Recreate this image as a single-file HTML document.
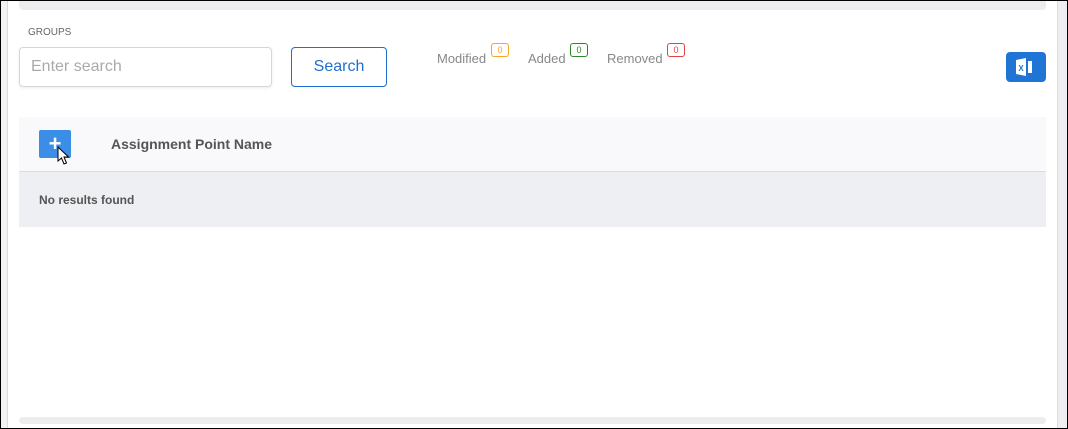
<!DOCTYPE html>
<html><head><style>
*{box-sizing:border-box;margin:0;padding:0}
body{width:1068px;height:429px;position:relative;overflow:hidden;background:#fff;font-family:"Liberation Sans",sans-serif;}
.frame{position:absolute;left:0;top:0;width:1068px;height:429px;border:1px solid #000;}
.ls{position:absolute;left:1px;top:0;width:7px;height:429px;background:#f3f3f5;border-right:1px solid #dcdce0}
.rs{position:absolute;left:1057px;top:0;width:10px;height:429px;background:#eeeef2;border-left:1px solid #dcdce0}
.bar{position:absolute;left:19px;width:1027px;background:#ededef;border-radius:4px}
.abs{position:absolute}
</style></head><body>
<div class="ls"></div><div class="rs"></div>
<div class="bar" style="top:0;height:10px;border-radius:0 0 4px 4px"></div>
<div class="bar" style="top:417px;height:7px"></div>
<div class="abs" style="left:28px;top:27px;font-size:10px;color:#666">GROUPS</div>
<div class="abs" style="left:19px;top:47px;width:253px;height:40px;border:1px solid #d5d7dc;border-radius:4px;box-shadow:0 1px 3px rgba(0,0,0,.08);font-size:16px;color:#aaa;padding:10px 11px">Enter search</div>
<div class="abs" style="left:291px;top:47px;width:96px;height:40px;border:1px solid #1f6fcf;border-radius:4px;font-size:16px;color:#1f6fcf;text-align:center;line-height:38px">Search</div>
<div class="abs" style="left:437px;top:51px;font-size:13px;color:#888">Modified</div>
<div class="abs" style="left:491px;top:43px;width:18px;height:14px;border:1px solid #f5a623;border-radius:3px;font-size:9px;color:#f5a623;text-align:center;line-height:12px">0</div>
<div class="abs" style="left:528px;top:51px;font-size:13px;color:#888">Added</div>
<div class="abs" style="left:570px;top:43px;width:18px;height:14px;border:1px solid #2a8a2a;border-radius:3px;font-size:9px;color:#2a8a2a;text-align:center;line-height:12px">0</div>
<div class="abs" style="left:607px;top:51px;font-size:13px;color:#888">Removed</div>
<div class="abs" style="left:667px;top:43px;width:18px;height:14px;border:1px solid #e84040;border-radius:3px;font-size:9px;color:#e84040;text-align:center;line-height:12px">0</div>
<div class="abs" style="left:1006px;top:52px;width:40px;height:30px;background:#1f74d6;border-radius:4px">
<svg width="40" height="30" viewBox="0 0 40 30"><path d="M10 8 L20 6 L20 24 L10 22Z" fill="#fff"/><rect x="22" y="9" width="4" height="12" fill="#fff"/><text x="15" y="19" font-size="8" font-weight="bold" fill="#1f74d6" text-anchor="middle" font-family="Liberation Sans">X</text></svg></div>
<div class="abs" style="left:19px;top:117px;width:1027px;height:55px;background:#f9f9fb;border-bottom:1px solid #dcdce0"></div>
<div class="abs" style="left:39px;top:130px;width:32px;height:28px;background:#3a8ee6;border-radius:2px;color:#fff;font-size:22px;font-weight:bold;text-align:center;line-height:28px">+</div>
<svg class="abs" style="left:57px;top:146px" width="14" height="20" viewBox="0 0 14 20"><path d="M1 1 L1 15 L4.5 12 L7 18 L9.5 17 L7 11 L11.5 11 Z" fill="#fff" stroke="#000" stroke-width="1"/></svg>
<div class="abs" style="left:111px;top:136px;font-size:14px;font-weight:bold;color:#555">Assignment Point Name</div>
<div class="abs" style="left:19px;top:172px;width:1027px;height:55px;background:#eeeff2"></div>
<div class="abs" style="left:39px;top:193px;font-size:12px;font-weight:bold;color:#555">No results found</div>
<div class="frame"></div>
</body></html>
